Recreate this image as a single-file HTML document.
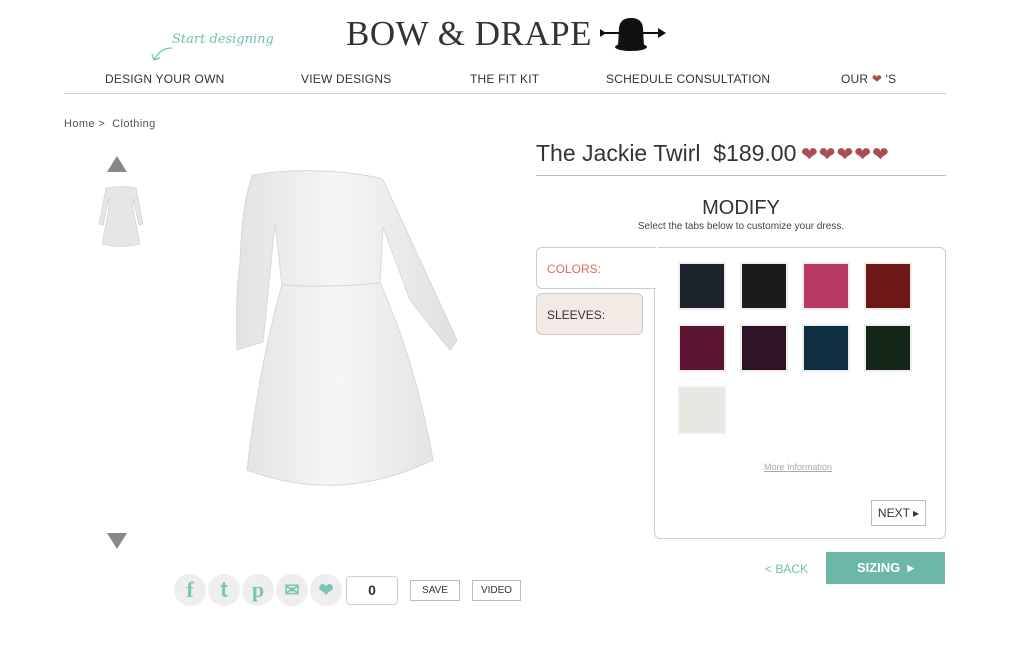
<!DOCTYPE html>
<html><head><meta charset="utf-8"><style>
*{margin:0;padding:0;box-sizing:border-box}
body{width:1024px;height:659px;background:#fff;font-family:"Liberation Sans",sans-serif;color:#333;position:relative;overflow:hidden}
.a{position:absolute}
.nav{top:72px;font-size:12px;color:#333;letter-spacing:.2px}
.sw{position:absolute;width:48px;height:48px;border:2px solid #eee}
.ci{position:absolute;top:574px;width:32px;height:32px;border-radius:50%;background:#eee;color:#7cc4b4;font-weight:bold;text-align:center;line-height:32px;font-size:22px}
.btn{position:absolute;border:1px solid #bbb;font-size:10px;text-align:center;color:#333}
</style></head><body>
<div class="a" style="left:346px;top:14px;font-family:'Liberation Serif',serif;font-size:35px;color:#333;letter-spacing:0.5px">BOW &amp; DRAPE</div>
<svg class="a" style="left:598px;top:16px" width="70" height="36"><line x1="2" y1="17" x2="66" y2="17" stroke="#111" stroke-width="2"/><polygon points="60,12 68,17 60,22" fill="#111"/><polygon points="2,13 8,17 2,21" fill="#111"/><path d="M20 30 L21 12 Q22 2 33 2 Q44 2 45 12 L46 30 Z" fill="#111"/><ellipse cx="33" cy="31" rx="16" ry="4" fill="#111"/></svg>
<div class="a" style="left:172px;top:32px;font-family:'DejaVu Serif',serif;font-style:italic;font-size:13px;color:#6cc2b3">Start designing</div>
<svg class="a" style="left:148px;top:44px" width="30" height="20"><path d="M24 4 Q12 4 6 16 M4 10 L6 16 L12 14" stroke="#6cc2b3" fill="none" stroke-width="1.2"/></svg>
<div class="a nav" style="left:105px">DESIGN YOUR OWN</div>
<div class="a nav" style="left:301px">VIEW DESIGNS</div>
<div class="a nav" style="left:470px">THE FIT KIT</div>
<div class="a nav" style="left:606px">SCHEDULE CONSULTATION</div>
<div class="a nav" style="left:841px">OUR <span style="color:#a84e55">&#10084;</span> 'S</div>
<div class="a" style="left:64px;top:93px;width:882px;height:1px;background:#ccc"></div>
<div class="a" style="left:64px;top:118px;font-size:11px;color:#555;letter-spacing:.4px">Home &gt;&nbsp; Clothing</div>
<svg class="a" style="left:106px;top:155px" width="22" height="18"><polygon points="11,1 21,17 1,17" fill="#888"/></svg>
<svg class="a" style="left:106px;top:532px" width="22" height="18"><polygon points="1,1 21,1 11,17" fill="#888"/></svg>
<svg class="a" style="left:96px;top:184px" width="50" height="66"><path d="M10 4 Q25 1 40 4 L47 40 L43 41 L37 14 L37 24 L44 60 Q25 65 6 60 L13 24 L13 14 L7 41 L3 40 Z" fill="#e6e6e6" stroke="#ccc" stroke-width=".6"/></svg>
<svg class="a" style="left:220px;top:160px" width="260" height="340"><defs><linearGradient id="g" x1="0" x2="1"><stop offset="0" stop-color="#e2e2e2"/><stop offset=".45" stop-color="#f6f6f6"/><stop offset="1" stop-color="#e0e0e0"/></linearGradient></defs>
<path d="M33 15 Q95 5 160 18 L163 20 Q200 100 237 180 L230 190 Q205 160 190 140 L163 67 L160 123 Q195 200 213 300 Q120 345 27 310 Q40 200 62 125 L55 63 L43 182 L17 190 Q15 140 20 103 Q22 40 33 15 Z" fill="url(#g)" stroke="#d8d8d8" stroke-width="1"/>
<path d="M62 125 Q110 128 160 123" stroke="#d4d4d4" fill="none"/>
<path d="M55 63 L62 125 M163 67 L160 123" stroke="#ddd" fill="none"/></svg>
<div class="a" style="left:536px;top:140px;font-size:23px;color:#333">The Jackie Twirl &nbsp;$189.00</div>
<div class="a" style="left:801px;top:142px;font-size:20px;color:#a84e55;letter-spacing:1px">&#10084;&#10084;&#10084;&#10084;&#10084;</div>
<div class="a" style="left:536px;top:175px;width:410px;height:1px;background:#bbb"></div>
<div class="a" style="left:536px;top:197px;width:410px;text-align:center;font-size:20px;color:#333">MODIFY</div>
<div class="a" style="left:536px;top:221px;width:410px;text-align:center;font-size:10px;color:#444">Select the tabs below to customize your dress.</div>
<div class="a" style="left:654px;top:247px;width:292px;height:292px;border:1px solid #ccc;border-radius:6px"></div>
<div class="a" style="left:536px;top:247px;width:120px;height:42px;border:1px solid #ccc;border-right:none;border-radius:6px 0 0 6px;background:#fff;font-size:12px;color:#e06b5f;padding:14px 10px">COLORS:</div>
<div class="a" style="left:655px;top:248px;width:4px;height:40px;background:#fff"></div>
<div class="a" style="left:536px;top:293px;width:107px;height:42px;border:1px solid #ccc;border-radius:6px;background:#f3e9e5;font-size:12px;color:#333;padding:14px 10px">SLEEVES:</div>
<div class="sw" style="left:678px;top:262px;background:#1c222c"></div>
<div class="sw" style="left:740px;top:262px;background:#1b1b1b"></div>
<div class="sw" style="left:802px;top:262px;background:#b83a62"></div>
<div class="sw" style="left:864px;top:262px;background:#6d1716"></div>
<div class="sw" style="left:678px;top:324px;background:#5c1433"></div>
<div class="sw" style="left:740px;top:324px;background:#2e1426"></div>
<div class="sw" style="left:802px;top:324px;background:#0f3040"></div>
<div class="sw" style="left:864px;top:324px;background:#142618"></div>
<div class="sw" style="left:678px;top:386px;background:#e8e8e2"></div>
<div class="a" style="left:764px;top:462px;font-size:9px;color:#aaa;text-decoration:underline">More Information</div>
<div class="btn" style="left:871px;top:500px;width:55px;height:26px;line-height:24px;font-size:12px">NEXT &#9656;</div>
<div class="a" style="left:765px;top:562px;font-size:12px;color:#6cc2b3">&lt; BACK</div>
<div class="a" style="left:826px;top:552px;width:119px;height:32px;background:#6cb8a8;color:#fff;font-weight:bold;font-size:13px;line-height:32px;text-align:center">SIZING &nbsp;&#9656;</div>
<div class="ci" style="left:174px;font-family:'Liberation Serif',serif">f</div>
<div class="ci" style="left:208px">t</div>
<div class="ci" style="left:242px;font-family:'Liberation Serif',serif">p</div>
<div class="ci" style="left:276px;font-size:18px">&#9993;</div>
<div class="ci" style="left:310px;font-size:18px">&#10084;</div>
<div class="a" style="left:346px;top:576px;width:52px;height:29px;border:1px solid #ccc;border-radius:4px;text-align:center;line-height:27px;font-weight:bold;font-size:14px;background:#fff">0</div>
<div class="btn" style="left:410px;top:580px;width:50px;height:21px;line-height:20px">SAVE</div>
<div class="btn" style="left:472px;top:580px;width:49px;height:21px;line-height:20px">VIDEO</div>
</body></html>
